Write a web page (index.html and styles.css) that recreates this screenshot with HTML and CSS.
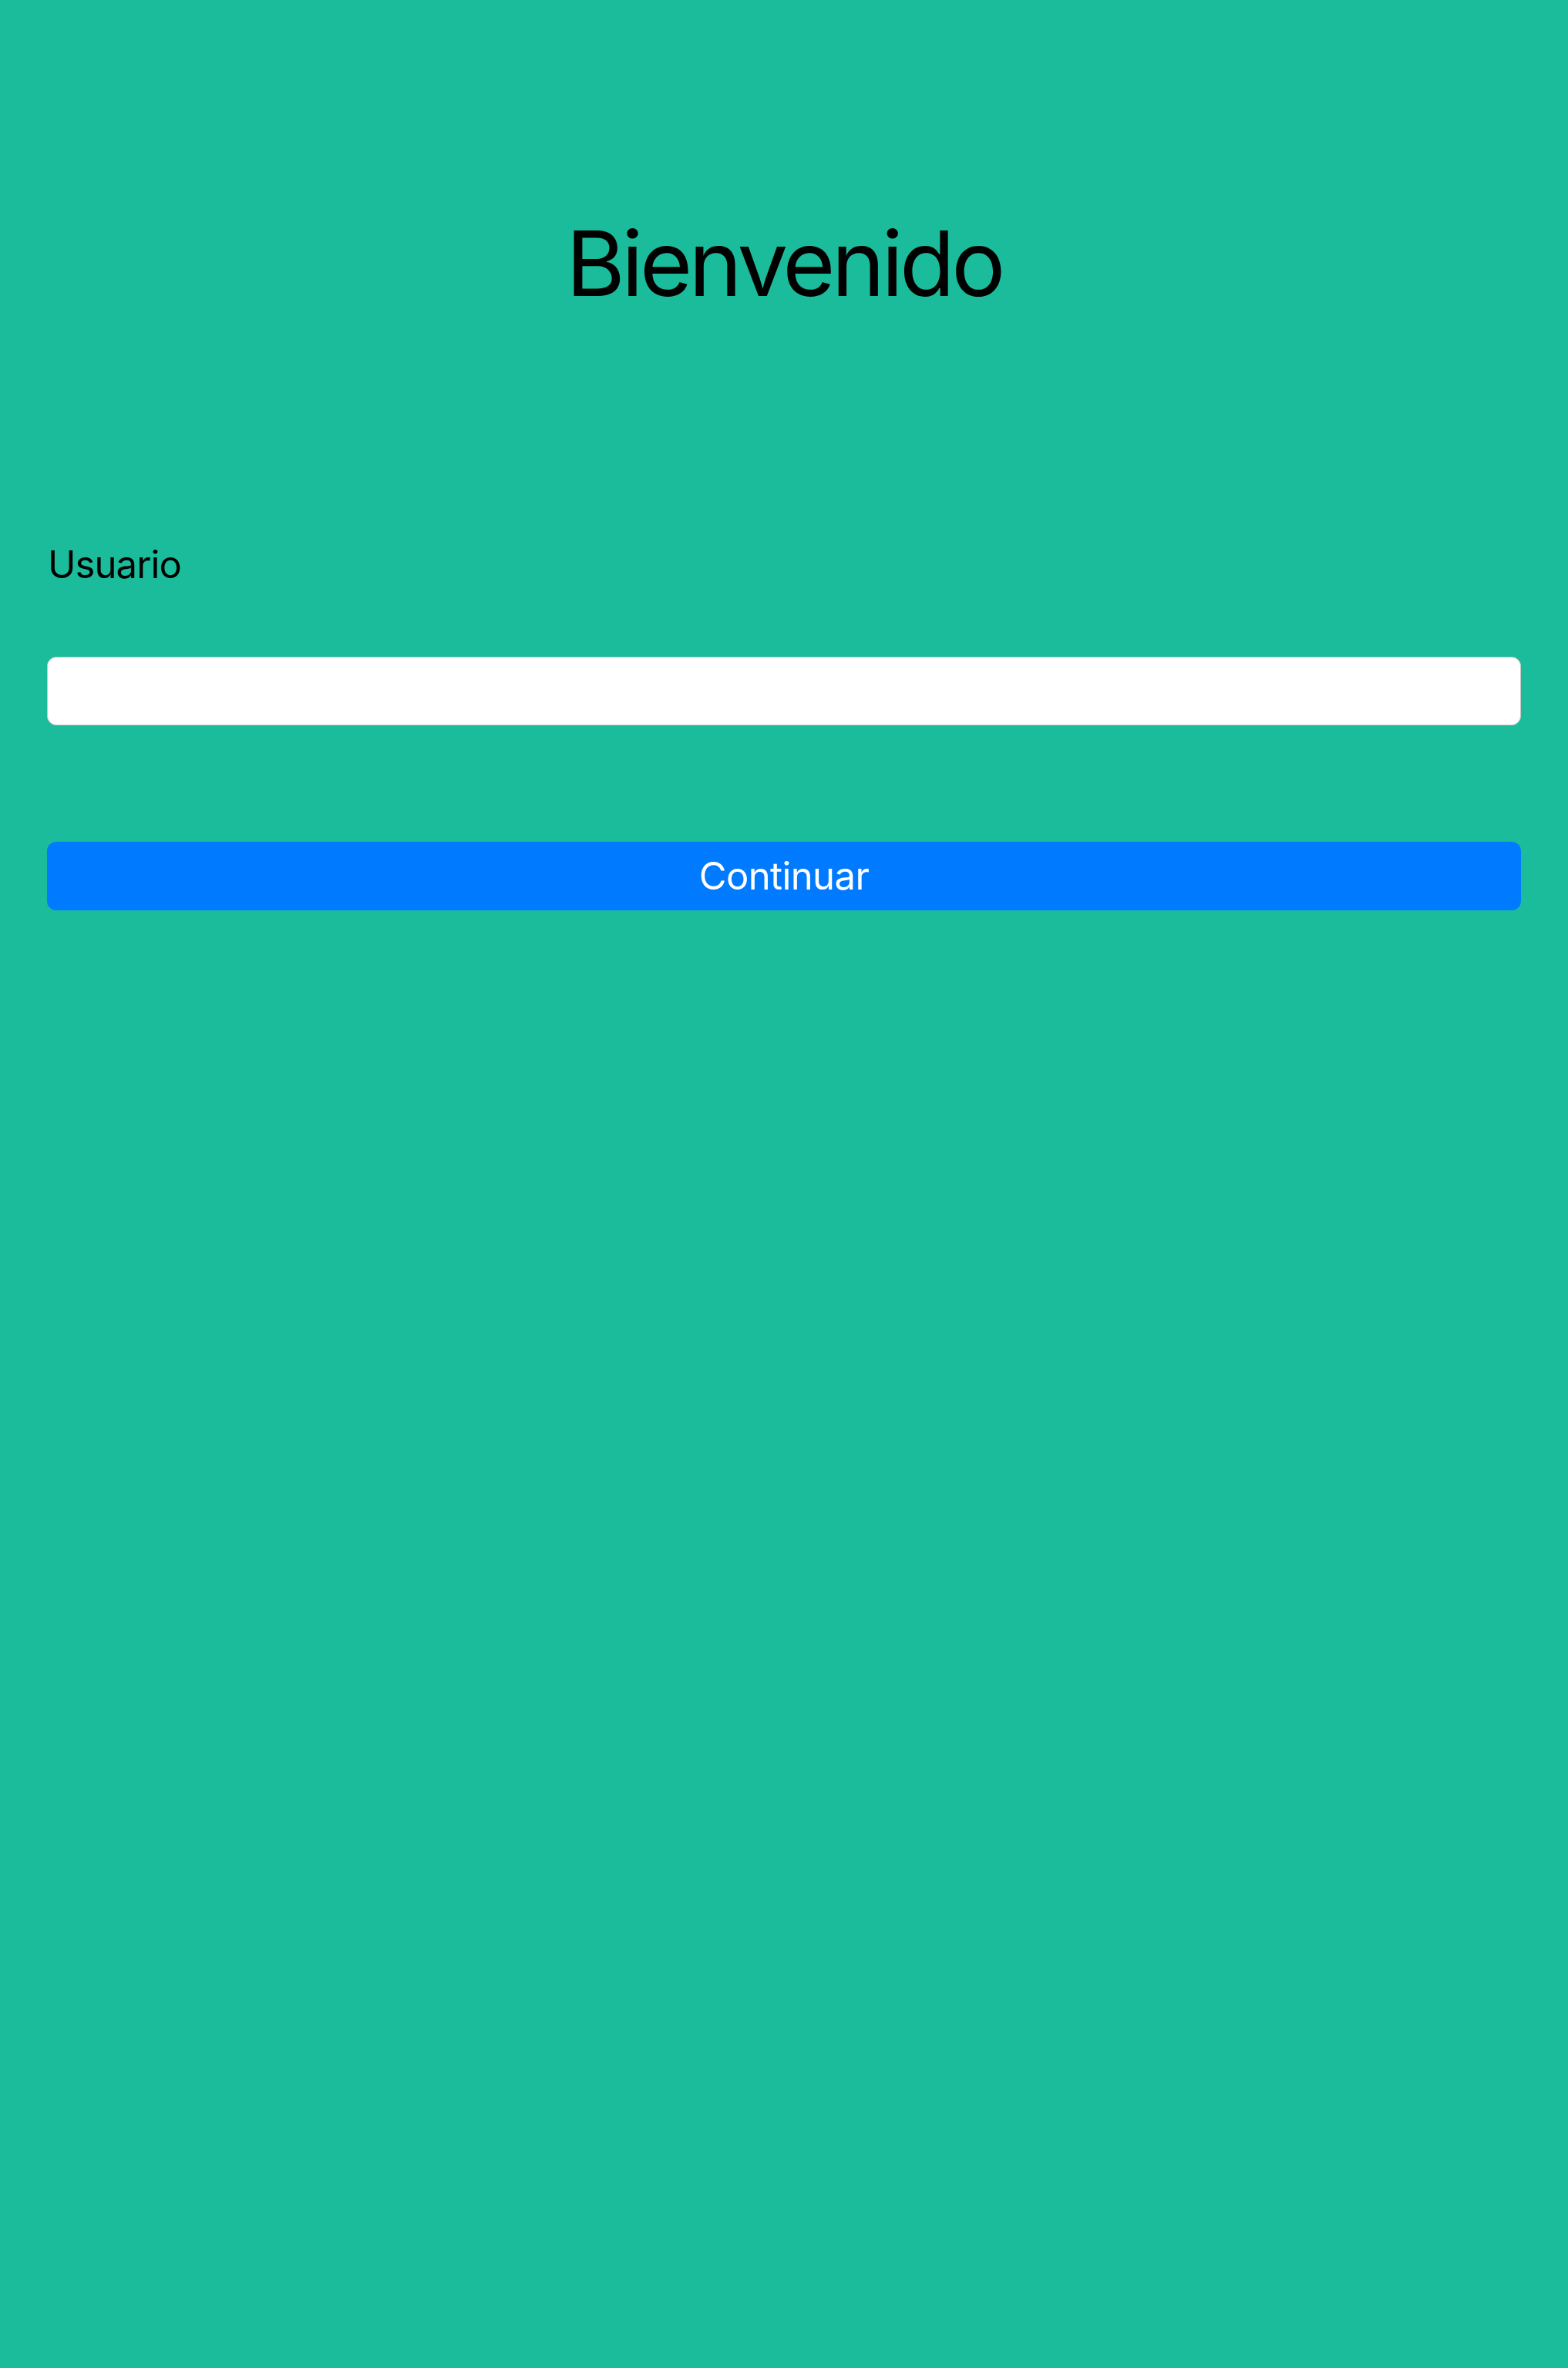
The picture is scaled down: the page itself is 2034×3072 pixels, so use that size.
FILE: index.html
```html
<!DOCTYPE html>
<html lang="es">
<head>
<meta charset="utf-8">
<title>Bienvenido</title>
<link rel="stylesheet" href="styles.css">
</head>
<body>
<main class="page">
  <h1 class="title">Bienvenido</h1>
  <form class="form">
    <label class="label" for="usuario">Usuario</label>
    <input class="input" id="usuario" type="text">
    <button class="button" type="button">Continuar</button>
  </form>
</main>
</body>
</html>
```
FILE: styles.css
```css
html, body {
  margin: 0;
  padding: 0;
  background: #1abc9c;
}
body {
  min-height: 3072px;
}
.page {
  display: flex;
  flex-direction: column;
  padding: 0 61px;
}
.title {
  margin: 283px 0 0;
  font-family: Inter, "Noto Sans", sans-serif;
  font-weight: 400;
  font-size: 117px;
  line-height: 117px;
  letter-spacing: -4.6px;
  color: #000;
  text-align: center;
}
.form {
  display: flex;
  flex-direction: column;
}
.label {
  margin-top: 303px;
  font-family: Inter, "Noto Sans", sans-serif;
  font-size: 49px;
  line-height: 60px;
  letter-spacing: -0.9px;
  color: #000;
  padding-left: 1px;
}
.input {
  margin-top: 89px;
  height: 89px;
  box-sizing: border-box;
  border: 1px solid #c8c8c8;
  border-radius: 12px;
  background: #fff;
  outline: none;
  font-family: Inter, sans-serif;
  font-size: 40px;
  padding: 0 16px;
}
.button {
  margin-top: 151px;
  height: 89px;
  border: none;
  border-radius: 12px;
  background: #007aff;
  color: #fff;
  font-family: Inter, "Noto Sans", sans-serif;
  font-size: 49px;
  letter-spacing: -0.6px;
  display: flex;
  align-items: center;
  justify-content: center;
  padding: 0;
}
```
